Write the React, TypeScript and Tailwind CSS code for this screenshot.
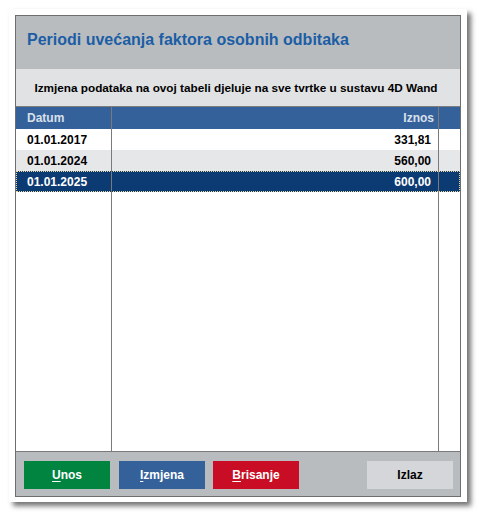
const rows = [
  { datum: '01.01.2017', iznos: '331,81' },
  { datum: '01.01.2024', iznos: '560,00' },
  { datum: '01.01.2025', iznos: '600,00' },
];

const SELECTED = 2;

function Btn({ first, rest, className }: { first: string; rest: string; className: string }) {
  return (
    <button type="button" className={`h-[28px] w-[86px] text-[12px] font-bold ${className}`}>
      <span className="underline underline-offset-2">{first}</span>
      {rest}
    </button>
  );
}

export default function App() {
  return (
    <div className="w-[478px] h-[514px] bg-white pt-[9px] pl-[9px] font-['Liberation_Sans',Arial,sans-serif]">
      <div className="w-[458px] h-[493px] bg-white p-[6px] pb-[5px] shadow-[4px_4px_5px_rgba(0,0,0,0.55)]">
        <div className="h-full flex flex-col border border-[#6e6e6e]">
          {/* Title */}
          <div className="h-[53px] shrink-0 bg-[#b9bcbf] pl-[11px] pt-[14px]">
            <h1 className="text-[16px] font-bold text-[#1b5ea5] leading-[20px]">
              Periodi uvećanja faktora osobnih odbitaka
            </h1>
          </div>

          {/* Notice */}
          <div className="h-[38px] shrink-0 bg-[#e1e2e4] border-b border-[#7d7d7d] flex items-center justify-center pr-[4px]">
            <span className="text-[11.75px] font-bold text-black">
              Izmjena podataka na ovoj tabeli djeluje na sve tvrtke u sustavu 4D Wand
            </span>
          </div>

          {/* Table */}
          <div className="flex-1 relative bg-white">
            <div className="h-[22px] flex bg-[#35619b] text-[12px] font-bold text-[#d9e0ea]">
              <div className="w-[95px] pl-[11px] flex items-center">Datum</div>
              <div className="w-[327px] pr-[4px] flex items-center justify-end">Iznos</div>
            </div>
            {rows.map((r, i) => (
              <div
                key={r.datum}
                className={`h-[21px] flex text-[12px] font-bold ${
                  i === SELECTED
                    ? 'bg-[#0c3a72] text-white outline outline-1 outline-dotted outline-[#e8d9a0] -outline-offset-1'
                    : i % 2 === 1
                    ? 'bg-[#e6e7e9] text-black'
                    : 'bg-white text-black'
                }`}
              >
                <div className="w-[95px] pl-[11px] flex items-center">{r.datum}</div>
                <div className="w-[327px] pr-[7px] flex items-center justify-end">{r.iznos}</div>
              </div>
            ))}
            {/* column rules */}
            <div className="absolute top-0 bottom-0 left-[95px] w-px bg-[#7a7a7a]" />
            <div className="absolute top-0 bottom-0 left-[422px] w-px bg-[#7a7a7a]" />
          </div>

          {/* Buttons */}
          <div className="h-[45px] shrink-0 bg-[#b9bcbf] border-t border-[#7a7a7a] flex items-center pl-[8px] pr-[7px] pt-[1px]">
            <Btn first="U" rest="nos" className="bg-[#00843f] text-white" />
            <Btn first="I" rest="zmjena" className="ml-[9px] bg-[#35619b] text-white" />
            <Btn first="B" rest="risanje" className="ml-[8px] bg-[#c80d24] text-white" />
            <button type="button" className="ml-auto h-[28px] w-[86px] bg-[#d4d6d9] text-[12px] font-bold text-black">
              Izlaz
            </button>
          </div>
        </div>
      </div>
    </div>
  );
}
